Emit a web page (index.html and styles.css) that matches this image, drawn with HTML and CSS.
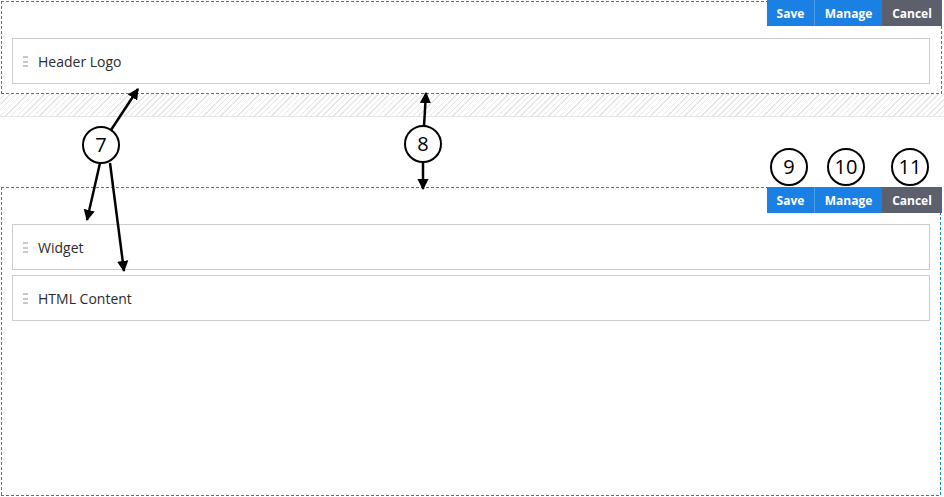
FILE: index.html
```html
<!DOCTYPE html>
<html lang="en">
<head>
  <meta charset="UTF-8" />
  <title>Layout Panes</title>
  <link rel="stylesheet" href="styles.css">
</head>
<body>

  <div class="pane pane-top">
    <div class="pane-actions">
      <button class="btn btn-save">Save</button>
      <button class="btn btn-manage">Manage</button>
      <button class="btn btn-cancel">Cancel</button>
    </div>
    <div class="module"><span class="handle"></span>Header Logo</div>
  </div>
  <div class="pane-gap"></div>

  <div class="pane pane-main">
    <div class="pane-actions">
      <button class="btn btn-save">Save</button>
      <button class="btn btn-manage">Manage</button>
      <button class="btn btn-cancel">Cancel</button>
    </div>
    <div class="module"><span class="handle"></span>Widget</div>
    <div class="module"><span class="handle"></span>HTML Content</div>
  </div>

  <!-- callouts drawn over the page -->
  <svg class="callouts" width="944" height="497" viewBox="0 0 944 497">
    <defs>
      <marker id="head" viewBox="0 0 10 10" refX="9" refY="5" markerWidth="4.5" markerHeight="5" orient="auto">
        <path d="M0 0 L10 5 L0 10 Z" fill="#000" />
      </marker>
    </defs>
    <g stroke="#000" stroke-width="2.5" fill="none">
      <line x1="111" y1="130" x2="138" y2="89" marker-end="url(#head)" />
      <line x1="100" y1="163" x2="87" y2="220" marker-end="url(#head)" />
      <line x1="110" y1="163" x2="124" y2="271" marker-end="url(#head)" />
      <line x1="424" y1="126" x2="426" y2="93" marker-end="url(#head)" />
      <line x1="423" y1="163" x2="423" y2="189" marker-end="url(#head)" />
    </g>
    <g stroke="#000" stroke-width="2" fill="#fff">
      <circle cx="101" cy="145" r="18" />
      <circle cx="423" cy="144" r="18" />
      <circle cx="789" cy="167" r="18" />
      <circle cx="846" cy="167" r="18" />
      <circle cx="910" cy="167" r="18" />
    </g>
    <g class="callout-num" text-anchor="middle">
      <text x="101" y="152">7</text>
      <text x="423" y="151">8</text>
      <text x="789" y="174">9</text>
      <text x="846" y="174">10</text>
      <text x="910" y="174">11</text>
    </g>
  </svg>

</body>
</html>
```

FILE: styles.css
```css
body {
  margin: 0;
  background: #fff;
  font-family: "Open Sans", sans-serif;
  color: #2b2b2b;
  position: relative;
  height: 497px;
  overflow: hidden;
}

/* dashed outline drawn with gradients so the dash length is fixed */
.pane {
  position: relative;
  margin: 0 2px 0 1px;
  display: flex;
  flex-direction: column;
  gap: 5px;
  background-image:
    repeating-linear-gradient(90deg, #1a7fe3 0 3px, #fff 3px 5px),
    repeating-linear-gradient(90deg, #1a7fe3 0 3px, #fff 3px 5px),
    repeating-linear-gradient(180deg, #1a7fe3 0 3px, #fff 3px 5px),
    repeating-linear-gradient(180deg, #1a7fe3 0 3px, #fff 3px 5px);
  background-size: 100% 1px, 100% 1px, 1px 100%, 1px 100%;
  background-position: 0 0, 0 100%, 0 0, 100% 0;
  background-repeat: no-repeat;
}

.pane-top {
  margin-top: 1px;
  padding: 37px 12px 10px 11px;
}

.pane-main {
  padding: 37px 11px 11px 11px;
  height: 261px;
  margin-right: 3px;
}

.pane-gap {
  height: 22px;
  margin-bottom: 70px;
  border-bottom: 1px solid #e6e6e6;
  background: repeating-linear-gradient(135deg, #fff 0, #fff 3px, #e6e6e6 3px, #e6e6e6 4px);
}

.pane-actions {
  position: absolute;
  top: -1px;
  right: 0;
  display: flex;
}

.pane-main .pane-actions {
  top: 0;
  right: -1px;
}

.btn {
  height: 26px;
  border: none;
  color: #fff;
  font-family: "Open Sans", sans-serif;
  font-weight: bold;
  font-size: 12px;
  padding: 0;
  cursor: pointer;
}

.btn-save {
  background: #1a80e3;
  width: 47px;
}

.btn-manage {
  background: #1a80e3;
  border-left: 1px solid #4b9be8;
  width: 68px;
}

.btn-cancel {
  background: #5b606c;
  width: 60px;
}

.module {
  height: 44px;
  border: 1px solid #ccc;
  display: flex;
  align-items: center;
  font-size: 14px;
  padding-left: 10px;
}

.handle {
  width: 5px;
  height: 11px;
  margin-right: 10px;
  background: repeating-linear-gradient(#c8c8c8 0, #c8c8c8 2px, transparent 2px, transparent 4.5px);
}

.callouts {
  position: absolute;
  top: 0;
  left: 0;
  pointer-events: none;
}

.callout-num {
  font-family: "Open Sans", sans-serif;
  font-size: 20px;
  fill: #000;
}
```
